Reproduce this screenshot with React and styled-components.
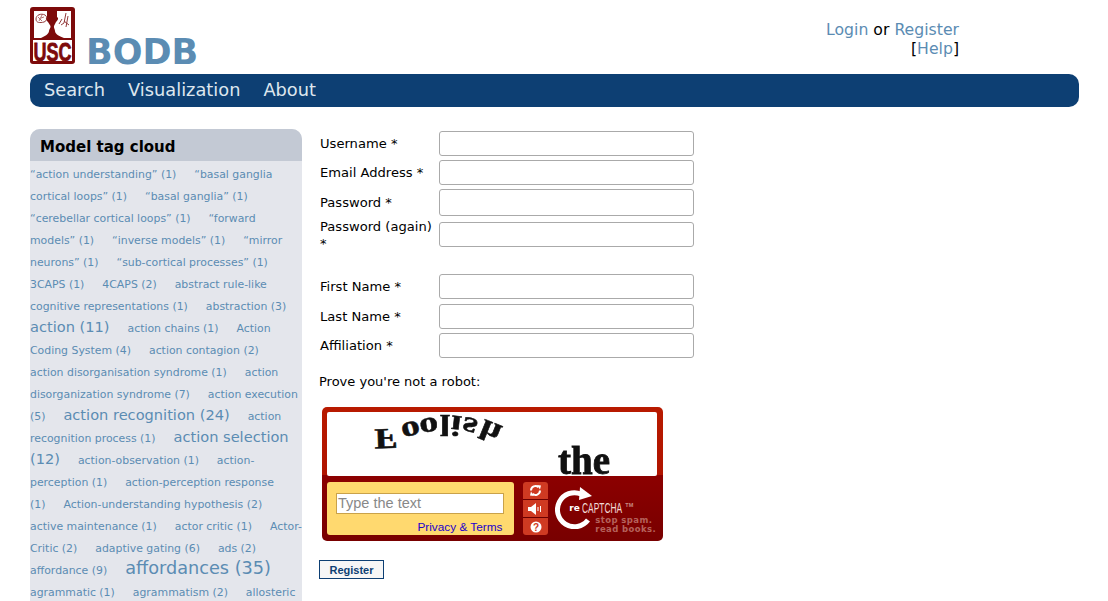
import React from 'react';
import styled, { createGlobalStyle } from 'styled-components';

const Global = createGlobalStyle`
  html, body { margin: 0; padding: 0; background: #fff; }
  body { font-family: "DejaVu Sans", sans-serif; color: #000; height: 601px; overflow: hidden; }
  a { color: #5b8cb3; text-decoration: none; }
`;

const Page = styled.div`
  padding: 7px 29px 0 30px;
`;

const Header = styled.header`
  display: flex;
  justify-content: space-between;
  height: 67px;
`;

const Brand = styled.div`
  display: flex;
  align-items: flex-start;
`;

const Title = styled.h1`
  margin: 25px 0 0 11px;
  font-size: 35px;
  line-height: 41px;
  font-weight: bold;
  color: #5b8cb3;
`;

const UserLinks = styled.div`
  margin-right: 120px;
  padding-top: 13px;
  font-size: 15.7px;
  line-height: 19px;
  text-align: right;
  white-space: nowrap;
`;

const Nav = styled.nav`
  display: flex;
  gap: 23px;
  height: 33px;
  box-sizing: border-box;
  align-items: center;
  padding: 0 0 2px 14px;
  background: #0d3f73;
  border-radius: 10px;
  a { color: #dde6ee; font-size: 17.8px; }
`;

const Content = styled.main`
  display: flex;
  margin-top: 22px;
`;

const Sidebar = styled.aside`
  width: 272px;
  height: 480px;
  flex: none;
  background: #e4e6ec;
  border-radius: 10px 10px 0 0;
  overflow: hidden;
`;

const SidebarTitle = styled.h3`
  margin: 0;
  height: 32px;
  padding-left: 10px;
  background: #c3c9d4;
  font-size: 15px;
  line-height: 36px;
  font-weight: bold;
  color: #000;
`;

const Cloud = styled.div`
  line-height: 22px;
  font-size: 10.9px;
  padding-top: 3px;
  word-spacing: 0.5px;
`;

const Tag = styled.a`
  font-size: ${(p) => p.$size || 10.9}px;
  line-height: 0;
  word-spacing: 0;
  margin-right: 14px;
`;

const FormColumn = styled.section`
  margin-left: 17px;
  width: 376px;
`;

const Row = styled.div`
  display: flex;
  align-items: center;
  margin-top: ${(p) => p.$top || 4}px;
  padding-left: 1px;
`;

const Label = styled.label`
  width: 119px;
  flex: none;
  font-size: 13.1px;
  line-height: 17px;
`;

const Field = styled.input`
  width: 255px;
  height: ${(p) => p.$h || 25}px;
  margin-bottom: ${(p) => p.$lift || 0}px;
  box-sizing: border-box;
  border: 1px solid #aaa;
  border-radius: 3px;
  background: #fff;
  padding: 0 4px;
`;

const Prove = styled.p`
  margin: 16px 0 0 0;
  font-size: 13px;
  line-height: 16px;
`;

const Captcha = styled.div`
  width: 341px;
  height: 134px;
  margin: 17px 0 0 3px;
  box-sizing: border-box;
  padding: 5px 6px 5px 5px;
  background: linear-gradient(#b81a00 0, #b01400 51%, #8c0000 51%, #780000 100%);
  border-radius: 5px;
  position: relative;
  overflow: hidden;
`;

const Challenge = styled.div`
  height: 64px;
  background: #fff;
  border-radius: 2px;
  position: relative;
  overflow: hidden;
  color: #111;
  font-family: "Liberation Serif", serif;
  font-weight: bold;
  filter: blur(0.4px);
`;

const WarpedLetter = styled.span`
  position: absolute;
  left: ${(p) => p.$x}px;
  top: ${(p) => p.$y}px;
  font-size: 29px;
  line-height: 29px;
  -webkit-text-stroke: 0.5px #111;
  transform: rotate(${(p) => p.$r}deg) scale(1.3, -1);
`;

const PlainWord = styled.span`
  position: absolute;
  left: 231px;
  top: 29px;
  font-size: 39px;
  line-height: 40px;
  -webkit-text-stroke: 0.8px #111;
`;

const CaptchaBottom = styled.div`
  display: flex;
  margin-top: 6px;
`;

const AnswerBox = styled.div`
  width: 188px;
  height: 53px;
  background: #ffd96f;
  border-radius: 3px;
  box-sizing: border-box;
  padding: 11px 10px 0 9px;
  font-family: "Liberation Sans", sans-serif;
  text-align: right;
`;

const AnswerInput = styled.div`
  height: 21px;
  box-sizing: border-box;
  background: #fff;
  border: 1px solid #c9a24a;
  font-size: 14.5px;
  line-height: 19px;
  padding-left: 1px;
  color: #888;
  text-align: left;
`;

const Privacy = styled.a`
  display: block;
  margin: 7px 2px 0 0;
  font-size: 11.8px;
  line-height: 13px;
  color: #2200cc;
`;

const Buttons = styled.div`
  width: 25px;
  height: 53px;
  margin-left: 9px;
  display: flex;
  flex-direction: column;
  gap: 1px;
  background: #6a0000;
  border-radius: 3px;
  overflow: hidden;
`;

const IconButton = styled.div`
  flex: 1;
  background: #cf3a22;
  display: flex;
  align-items: center;
  justify-content: center;
`;

const Logo = styled.div`
  margin-left: 5px;
  width: 104px;
  height: 53px;
  position: relative;
  color: #fff;
`;

const ArrowMark = styled.svg`
  position: absolute;
  left: 2px;
  top: 5px;
`;

const LogoRe = styled.span`
  position: absolute;
  left: 16px;
  top: 21px;
  font-weight: bold;
  font-size: 9px;
  line-height: 10px;
`;

const LogoWord = styled.span`
  position: absolute;
  left: 29px;
  top: 19px;
  font-family: "Liberation Sans", sans-serif;
  font-size: 14px;
  line-height: 15px;
  white-space: nowrap;
  transform: scaleX(0.6);
  transform-origin: 0 0;
  color: #f2dcd8;
`;

const LogoTm = styled.span`
  position: absolute;
  left: 72px;
  top: 20px;
  font-family: "Liberation Sans", sans-serif;
  font-weight: bold;
  font-size: 5.5px;
  line-height: 6px;
  color: #c98c84;
`;

const Slogan = styled.span`
  position: absolute;
  left: 42px;
  top: 34px;
  font-size: 8.5px;
  line-height: 8.5px;
  letter-spacing: 0.4px;
  font-weight: bold;
  color: #b5625c;
  white-space: nowrap;
`;

const Submit = styled.button`
  display: block;
  width: 65px;
  height: 19px;
  margin-top: 19px;
  padding: 0;
  background: #f6f6f6;
  border: 1px solid #0d3f73;
  color: #0d3f73;
  font-family: "Liberation Sans", sans-serif;
  font-size: 11px;
  font-weight: bold;
`;

const LARGE = 14.6;
const HUGE = 17.7;

const TAGS = [
  ['“action understanding” (1)'], ['“basal ganglia cortical loops” (1)'], ['“basal ganglia” (1)'],
  ['“cerebellar cortical loops” (1)'], ['“forward models” (1)'], ['“inverse models” (1)'],
  ['“mirror neurons” (1)'], ['“sub-cortical processes” (1)'], ['3CAPS (1)'], ['4CAPS (2)'],
  ['abstract rule-like cognitive representations (1)'], ['abstraction (3)'], ['action (11)', LARGE],
  ['action chains (1)'], ['Action Coding System (4)'], ['action contagion (2)'],
  ['action disorganisation syndrome (1)'], ['action disorganization syndrome (7)'],
  ['action execution (5)'], ['action recognition (24)', LARGE], ['action recognition process (1)'],
  ['action selection (12)', LARGE], ['action-observation (1)'], ['action-perception (1)'],
  ['action-perception response (1)'], ['Action-understanding hypothesis (2)'],
  ['active maintenance (1)'], ['actor critic (1)'], ['Actor-Critic (2)'], ['adaptive gating (6)'],
  ['ads (2)'], ['affordance (9)'], ['affordances (35)', HUGE], ['agrammatic (1)'],
  ['agrammatism (2)'], ['allosteric modulation (1)'],
];

const WARPED = [
  ['F', 50, 12, -2], ['o', 77, 5, -14], ['o', 95, 1, -8], ['l', 114, -2, 0],
  ['i', 125, -1, 6], ['s', 137, 1, 14], ['h', 155, 5, 22],
];

function UscLogo() {
  return (
    <svg width="45" height="57" viewBox="0 0 45 57">
      <rect x="0" y="0" width="45" height="57" rx="3" fill="#7d0b0b" />
      <path d="M4 4H17V10C15 11 16 13 18 15L20.5 19C21 21 19 22 19 24C19 27 15 29 11 31H4Z" fill="#fff" />
      <path d="M41 4H27V10C29 11 28 13 26 15L24 19C23.5 21 25 22 25 24C25 27 29 29 34 31H41Z" fill="#fff" />
      <path d="M6 12C6 8 11 6 15 8C18 10 17 14 14 15C10 16 6 16 6 12Z" fill="none" stroke="#93393a" strokeWidth="1" />
      <path d="M8 10L12 14M12 8L9 14M14 10L11 11" stroke="#93393a" strokeWidth="0.7" />
      <path d="M36 6L34 16L31 18M38 9L36 20M32 12L29 17M34 14L39 18" fill="none" stroke="#93393a" strokeWidth="1" />
      <rect x="3" y="33" width="39" height="21" fill="#fff" />
      <text x="22.5" y="53.5" textAnchor="middle" fontFamily="Liberation Sans" fontWeight="bold" fontSize="26" textLength="38" lengthAdjust="spacingAndGlyphs" fill="#7d0b0b" stroke="#7d0b0b" strokeWidth="0.8">USC</text>
    </svg>
  );
}

function ReloadIcon() {
  return (
    <svg width="13" height="13" viewBox="0 0 13 13">
      <path d="M2 6.5A4.5 4.5 0 0 1 9.5 3.2M11 6.5A4.5 4.5 0 0 1 3.5 9.8" fill="none" stroke="#fff" strokeWidth="2" />
      <path d="M8 1L12 1.5L11 5.5ZM5 12L1 11.5L2 7.5Z" fill="#fff" />
    </svg>
  );
}

function SoundIcon() {
  return (
    <svg width="15" height="12" viewBox="0 0 15 12">
      <path d="M0 4H3L8 0V12L3 8H0Z" fill="#fff" />
      <path d="M10 4V8M12.5 3V9" stroke="#fff" strokeWidth="1" />
    </svg>
  );
}

function HelpIcon() {
  return (
    <svg width="12" height="12" viewBox="0 0 12 12">
      <circle cx="6" cy="6" r="5.5" fill="#fff" />
      <text x="6" y="9.5" textAnchor="middle" fontFamily="Liberation Sans" fontWeight="bold" fontSize="10" fill="#cf3a22">?</text>
    </svg>
  );
}

function RecaptchaArrow() {
  return (
    <ArrowMark width="40" height="42" viewBox="0 0 40 42">
      <path d="M33 33A17 17 0 1 1 26 7" fill="none" stroke="#fff" strokeWidth="5" />
      <path d="M25 0L37 9L24 13Z" fill="#fff" />
    </ArrowMark>
  );
}

export default function App() {
  return (
    <Page>
      <Global />
      <Header>
        <Brand>
          <UscLogo />
          <Title>BODB</Title>
        </Brand>
        <UserLinks>
          <div><a href="#">Login</a> or <a href="#">Register</a></div>
          <div>[<a href="#">Help</a>]</div>
        </UserLinks>
      </Header>
      <Nav>
        <a href="#">Search</a>
        <a href="#">Visualization</a>
        <a href="#">About</a>
      </Nav>
      <Content>
        <Sidebar>
          <SidebarTitle>Model tag cloud</SidebarTitle>
          <Cloud>
            {TAGS.map(([name, size]) => (
              <React.Fragment key={name}>
                <Tag href="#" $size={size}>{name}</Tag>{' '}
              </React.Fragment>
            ))}
          </Cloud>
        </Sidebar>
        <FormColumn>
          <Row $top={2}><Label>Username *</Label><Field /></Row>
          <Row><Label>Email Address *</Label><Field /></Row>
          <Row><Label>Password *</Label><Field $h={27} /></Row>
          <Row $top={2}><Label>Password (again) *</Label><Field $lift={1} /></Row>
          <Row $top={22}><Label>First Name *</Label><Field /></Row>
          <Row $top={5}><Label>Last Name *</Label><Field /></Row>
          <Row><Label>Affiliation *</Label><Field /></Row>
          <Prove>Prove you're not a robot:</Prove>
          <Captcha>
            <Challenge>
              {WARPED.map(([ch, x, y, r], i) => (
                <WarpedLetter key={i} $x={x} $y={y} $r={r}>{ch}</WarpedLetter>
              ))}
              <PlainWord>the</PlainWord>
            </Challenge>
            <CaptchaBottom>
              <AnswerBox>
                <AnswerInput>Type the text</AnswerInput>
                <Privacy href="#">Privacy &amp; Terms</Privacy>
              </AnswerBox>
              <Buttons>
                <IconButton><ReloadIcon /></IconButton>
                <IconButton><SoundIcon /></IconButton>
                <IconButton><HelpIcon /></IconButton>
              </Buttons>
              <Logo>
                <RecaptchaArrow />
                <LogoRe>re</LogoRe>
                <LogoWord>CAPTCHA</LogoWord>
                <LogoTm>TM</LogoTm>
                <Slogan>stop spam.<br />read books.</Slogan>
              </Logo>
            </CaptchaBottom>
          </Captcha>
          <Submit>Register</Submit>
        </FormColumn>
      </Content>
    </Page>
  );
}
